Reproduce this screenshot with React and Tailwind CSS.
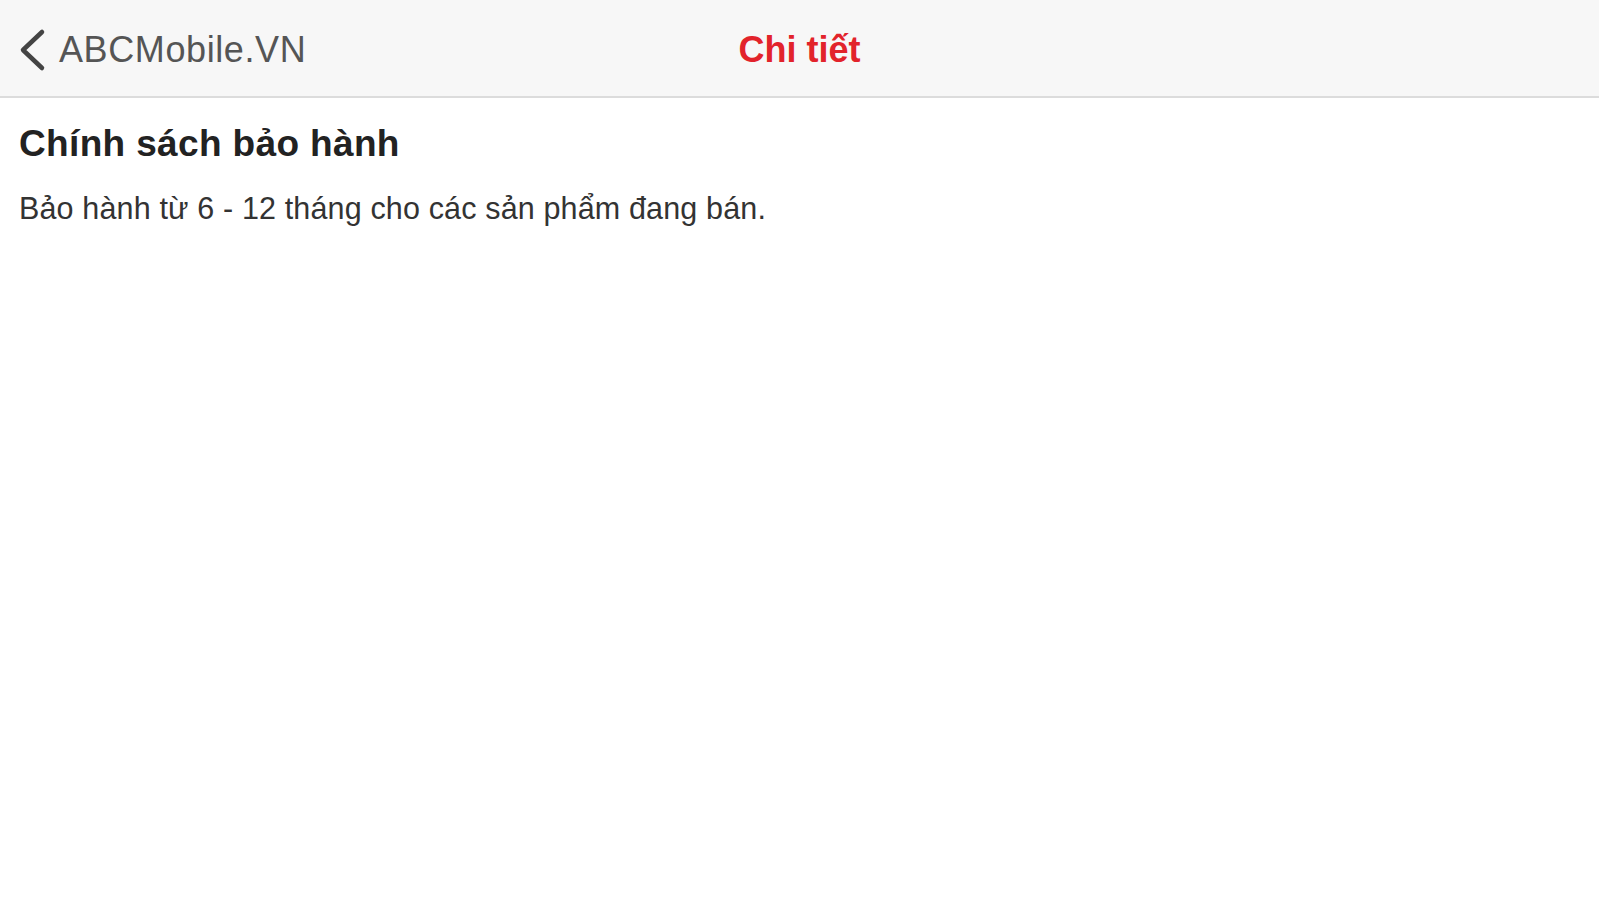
export default function App() {
  return (
    <div className="min-h-screen w-full bg-white" style={{ fontFamily: '"Liberation Sans", Arial, sans-serif' }}>
      <div className="grid h-[98px] grid-cols-[1fr_auto_1fr] items-center border-b-2 border-[#dcdcdc] bg-[#f7f7f7]">
        <div className="flex items-center pl-[18px] pt-[4px]">
          <svg width="30" height="44" viewBox="0 0 30 44" className="mr-[11px]">
            <path d="M24 4 L5 22 L24 40" fill="none" stroke="#444" strokeWidth="4.5" strokeLinecap="round" strokeLinejoin="round" />
          </svg>
          <span className="text-[36px] leading-[44px] tracking-[0.6px] text-[#555555]">ABCMobile.VN</span>
        </div>
        <div className="pt-[4px] text-[36px] font-bold leading-[44px] text-[#e2232b]">Chi tiết</div>
        <div />
      </div>
      <div className="px-[19px]">
        <h1 className="mt-[24px] text-[37px] font-bold leading-[44px] tracking-[0.35px] text-[#222222]">Chính sách bảo hành</h1>
        <p className="mt-[23px] text-[30.5px] leading-[38px] tracking-[0.15px] text-[#333333]">Bảo hành từ 6 - 12 tháng cho các sản phẩm đang bán.</p>
      </div>
    </div>
  );
}
